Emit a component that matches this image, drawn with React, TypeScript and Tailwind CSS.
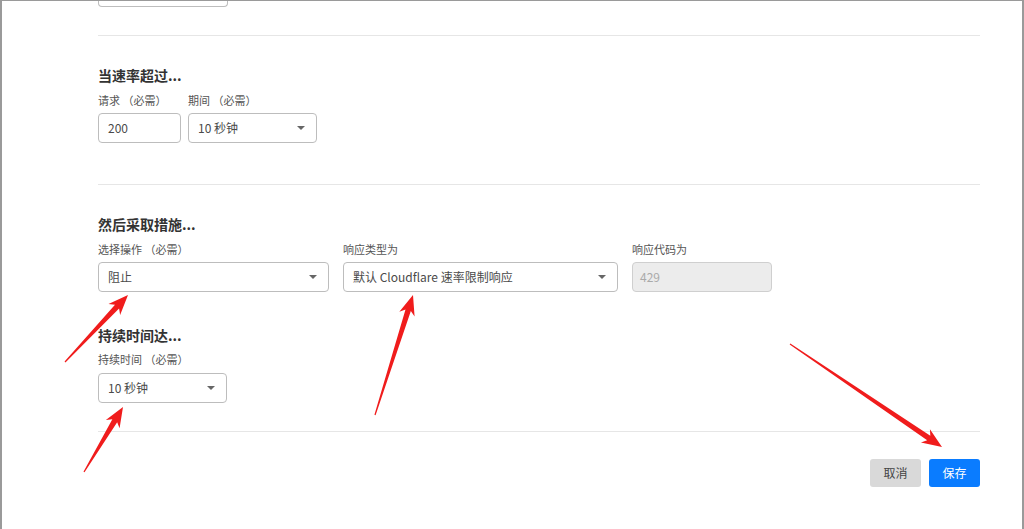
import type { ReactNode } from 'react'

const FONT = { fontFamily: '"Noto Sans CJK SC", "Noto Sans", sans-serif' }

type Pt = [number, number]

// tapered red annotation arrow, from tail to tip
function arrowPoints(from: Pt, to: Pt) {
  const [x1, y1] = from
  const [x2, y2] = to
  const dx = x2 - x1
  const dy = y2 - y1
  const len = Math.hypot(dx, dy)
  const ux = dx / len
  const uy = dy / len
  const nx = -uy
  const ny = ux
  const headLen = 20
  const headW = 8
  const neckW = 2.8
  const bx = x2 - ux * headLen
  const by = y2 - uy * headLen
  const pts: Pt[] = [
    [x1 + nx * 0.6, y1 + ny * 0.6],
    [bx + ux * 4 + nx * neckW, by + uy * 4 + ny * neckW],
    [bx + nx * headW, by + ny * headW],
    [x2, y2],
    [bx - nx * headW, by - ny * headW],
    [bx + ux * 4 - nx * neckW, by + uy * 4 - ny * neckW],
    [x1 - nx * 0.6, y1 - ny * 0.6],
  ]
  return pts.map((p) => p.join(',')).join(' ')
}

const ARROWS: [Pt, Pt][] = [
  [[63, 361], [126, 294]],
  [[373, 414], [411, 294]],
  [[82, 471], [121, 406]],
  [[788, 343], [940, 446]],
]

function Caret() {
  return (
    <svg width="8" height="4" viewBox="0 0 8 4" className="shrink-0">
      <path d="M0 0h8L4 4z" fill="#666" />
    </svg>
  )
}

function Label({ children }: { children: ReactNode }) {
  return <div className="text-[11px] leading-4 text-[#555]">{children}</div>
}

function Heading({ children, className }: { children: ReactNode; className: string }) {
  return <div className={`text-[14px] leading-5 font-bold text-[#333] ${className}`}>{children}</div>
}

function Select({ value, width }: { value: string; width: string }) {
  return (
    <div
      className={`${width} h-[30px] flex items-center justify-between pl-[9px] pr-[11px] border border-[#bdbdbd] rounded-[4px] bg-white text-[12px] text-[#4a4a4a]`}
    >
      <span>{value}</span>
      <Caret />
    </div>
  )
}

function Divider({ className }: { className: string }) {
  return <div className={`h-px bg-[#e6e6e6] ${className}`} />
}

export default function App() {
  return (
    <div
      style={FONT}
      className="relative w-[1024px] h-[529px] overflow-hidden bg-white border-t border-l-2 border-r-2 border-[#9a9a9a]"
    >
      <div className="ml-[96px] w-[882px] flex flex-col">
        {/* tail of the field above */}
        <div className="w-[130px] h-[6px] border border-t-0 border-[#bdbdbd] rounded-b-[4px]" />
        <Divider className="mt-[28px]" />

        <Heading className="mt-[29px]">当速率超过...</Heading>
        <div className="mt-[7px] flex gap-[7px]">
          <div className="flex flex-col gap-[5px]">
            <Label>请求 （必需）</Label>
            <div className="w-[83px] h-[30px] flex items-center pl-[9px] border border-[#bdbdbd] rounded-[4px] text-[12px] text-[#4a4a4a]">
              200
            </div>
          </div>
          <div className="flex flex-col gap-[5px]">
            <Label>期间 （必需）</Label>
            <Select value="10 秒钟" width="w-[129px]" />
          </div>
        </div>

        <Divider className="mt-[41px]" />

        <Heading className="mt-[29px]">然后采取措施...</Heading>
        <div className="mt-[7px] flex gap-[14px]">
          <div className="flex flex-col gap-[5px]">
            <Label>选择操作 （必需）</Label>
            <Select value="阻止" width="w-[231px]" />
          </div>
          <div className="flex flex-col gap-[5px]">
            <Label>响应类型为</Label>
            <Select value="默认 Cloudflare 速率限制响应" width="w-[275px]" />
          </div>
          <div className="flex flex-col gap-[5px]">
            <Label>响应代码为</Label>
            <div className="w-[140px] h-[30px] flex items-center pl-[7px] border border-[#cfcfcf] rounded-[4px] bg-[#ececec] text-[12px] text-[#aaa]">
              429
            </div>
          </div>
        </div>

        <Heading className="mt-[33px]">持续时间达...</Heading>
        <div className="mt-[6px] flex flex-col gap-[6px]">
          <Label>持续时间 （必需）</Label>
          <Select value="10 秒钟" width="w-[129px]" />
        </div>

        <Divider className="mt-[28px]" />

        <div className="mt-[27px] flex justify-end gap-[8px]">
          <button className="w-[51px] h-[28px] rounded-[3px] bg-[#d9d9d9] text-[12px] text-[#444]">取消</button>
          <button className="w-[51px] h-[28px] rounded-[3px] bg-[#0a7cff] text-[12px] text-white">保存</button>
        </div>
      </div>

      <svg className="absolute inset-0 pointer-events-none" width="1024" height="529">
        {ARROWS.map(([a, b], i) => (
          <polygon key={i} points={arrowPoints(a, b)} fill="#f01c1c" />
        ))}
      </svg>
    </div>
  )
}
